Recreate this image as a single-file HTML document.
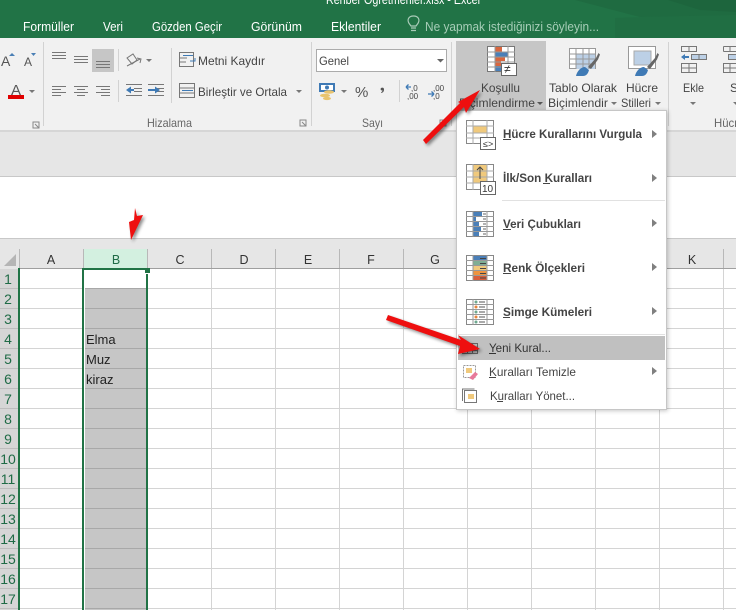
<!DOCTYPE html>
<html><head><meta charset="utf-8"><style>
html,body{margin:0;padding:0;background:#fff;overflow:hidden}
svg{display:block}
text{font-family:"Liberation Sans","DejaVu Sans",sans-serif;font-size:12px;fill:#444}
.t{fill:#fff;font-size:12.5px}
.h{font-size:12.5px;fill:#333;text-anchor:middle}
.r{font-size:14px;fill:#1f6b46;text-anchor:middle}
.m{font-weight:bold;font-size:12px;fill:#444}
.c{font-size:13px;fill:#222}
</style></head><body>
<svg width="736" height="610" viewBox="0 0 736 610" xmlns="http://www.w3.org/2000/svg">
<defs>
<filter id="b" x="-20%" y="-20%" width="140%" height="140%"><feGaussianBlur stdDeviation="1.5"/></filter>
<filter id="s" x="-5%" y="-5%" width="110%" height="110%"><feGaussianBlur stdDeviation="2"/></filter>
</defs>
<!-- title bar -->
<rect width="736" height="38" fill="#217346"/>
<polygon points="615,18 736,14 736,38 615,38" fill="#206e43"/>
<polygon points="575,0 736,0 736,15 640,17" fill="#1f6b41"/>
<polygon points="668,0 736,0 736,12 700,10" fill="#1d653d"/>
<text class="t" x="326" y="4" textLength="154" lengthAdjust="spacingAndGlyphs">Rehber Öğretmenler.xlsx - Excel</text>
<text class="t" x="23" y="31" textLength="51" lengthAdjust="spacingAndGlyphs">Formüller</text>
<text class="t" x="103" y="31" textLength="20" lengthAdjust="spacingAndGlyphs">Veri</text>
<text class="t" x="152" y="31" textLength="70" lengthAdjust="spacingAndGlyphs">Gözden Geçir</text>
<text class="t" x="251" y="31" textLength="51" lengthAdjust="spacingAndGlyphs">Görünüm</text>
<text class="t" x="331" y="31" textLength="50" lengthAdjust="spacingAndGlyphs">Eklentiler</text>
<path d="M411 28h5M411 30.500h5M409.500 24c-3-4-1-8 4-8s7 4 4 8l-1.500 2h-5z" fill="none" stroke="#a9cbb8" stroke-width="1.200"/>
<text x="425" y="31" textLength="174" lengthAdjust="spacingAndGlyphs" style="font-size:12.500px;fill:#a6cdb7">Ne yapmak istediğinizi söyleyin...</text>

<!-- ribbon -->
<rect y="38" width="736" height="92" fill="#f1f1f1"/>
<rect y="130" width="736" height="2" fill="#d6d6d6"/>
<rect y="132" width="736" height="45" fill="#e6e6e6"/>
<rect y="176" width="736" height="1" fill="#c8c8c8"/>
<rect y="177" width="736" height="61" fill="#fff"/>
<rect y="238" width="736" height="1" fill="#c8c8c8"/>
<rect y="239" width="736" height="30" fill="#e6e6e6"/>
<g fill="#d2d2d2">
<rect x="43" y="42" width="1" height="84"/><rect x="311" y="42" width="1" height="84"/><rect x="451" y="42" width="1" height="84"/><rect x="668" y="42" width="1" height="84"/>
<rect x="118" y="49" width="1" height="22"/><rect x="118" y="80" width="1" height="22"/><rect x="171" y="48" width="1" height="55"/><rect x="399" y="80" width="1" height="22"/>
</g>
<!-- font controls -->
<text x="1" y="66" style="font-size:14px;fill:#555">A</text>
<path d="M9 56l3-3 3 3z" fill="#4a7fb5"/>
<text x="24" y="66" style="font-size:12px;fill:#555">A</text>
<path d="M31 53h5l-2.500 3z" fill="#4a7fb5"/>
<text x="11" y="95" style="font-size:15px;fill:#555">A</text>
<rect x="8" y="95" width="16" height="4" fill="#e00000"/>
<path d="M29 90h6l-3 3z" fill="#777"/>
<path d="M33 122h6v6h-6zM35 124l4 4" fill="none" stroke="#888"/>
<!-- alignment -->
<rect x="92" y="49" width="22" height="23" fill="#c6c6c6"/>
<g stroke="#777" stroke-width="1" fill="none">
<path d="M52 52.500h14M52 55.500h14M52 58.500h14"/>
<path d="M74 56.500h14M74 59.500h14M74 62.500h14"/>
<path d="M96 61.500h14M96 64.500h14M96 67.500h14"/>
<path d="M52 86.500h14M52 89.500h9M52 92.500h14M52 95.500h9"/>
<path d="M74 86.500h14M77 89.500h8M74 92.500h14M77 95.500h8"/>
<path d="M96 86.500h14M101 89.500h9M96 92.500h14M101 95.500h9"/>
<path d="M126 84.500h16M134 88.500h8M134 91.500h8M126 95.500h16"/>
<path d="M148 84.500h16M156 88.500h8M156 91.500h8M148 95.500h16"/>
<path d="M127 66l13-7M137 58l4 1-1 4"/>
<path d="M127 58l6-4 4 6-5 4z"/>
</g>
<path d="M126 90l5-3.500v7zM131 89h3v2h-3z" fill="#3f7ab5"/>
<path d="M160 90l-5-3.500v7zM148 89h7v2h-7z" fill="#3f7ab5"/>
<path d="M146 59h6l-3 3z" fill="#777"/>
<!-- wrap and merge -->
<g fill="none" stroke="#777">
<rect x="179.500" y="52.500" width="14" height="14"/>
<path d="M179 58h8M179 62h7"/>
<rect x="179.500" y="83.500" width="15" height="14"/>
<path d="M179 88h16M179 93h16"/>
</g>
<path d="M183 55.500h10M190 61h5v-3" fill="none" stroke="#3f7ab5"/>
<path d="M182 90.500h11" stroke="#3f7ab5" fill="none"/>
<text x="198" y="65" textLength="67" lengthAdjust="spacingAndGlyphs">Metni Kaydır</text>
<text x="198" y="96" textLength="89" lengthAdjust="spacingAndGlyphs">Birleştir ve Ortala</text>
<path d="M296 90h6l-3 3z" fill="#777"/>
<text x="147" y="127" textLength="45" lengthAdjust="spacingAndGlyphs" style="fill:#666">Hizalama</text>
<path d="M300 120h6v6h-6zM302 122l4 4" fill="none" stroke="#888"/>
<!-- number -->
<rect x="316.500" y="49.500" width="130" height="22" fill="#fff" stroke="#ababab"/>
<text x="319" y="65" textLength="30" lengthAdjust="spacingAndGlyphs">Genel</text>
<path d="M437 59h7l-3.500 3.500z" fill="#666"/>
<rect x="320" y="84" width="14" height="7" fill="#fff" stroke="#3f7ab5" stroke-width="2"/>
<circle cx="327" cy="87.500" r="2" fill="#3f7ab5"/>
<ellipse cx="329" cy="92" rx="5" ry="1.800" fill="#e9c46f"/><ellipse cx="325" cy="95.500" rx="5" ry="1.800" fill="#e9c46f"/><ellipse cx="327" cy="98.500" rx="4" ry="1.600" fill="#e9c46f"/>
<path d="M341 90h6l-3 3z" fill="#777"/>
<text x="355" y="97" style="font-size:15px;fill:#555">%</text>
<path d="M381 88c2-1 3 0 3 1.500 0 2-1 3-2.500 3.500l-.500-.8c1-.5 1.500-1 1.500-1.700-1.500.3-2.500-1-1.500-2.500z" fill="#555"/>
<text x="411" y="91" style="font-size:8px">,0</text><text x="407" y="99" style="font-size:8px">,00</text>
<text x="433" y="91" style="font-size:8px">,00</text><text x="433" y="99" style="font-size:8px">,0</text>
<path d="M406 87h5M406 87l2.500-2.500M406 87l2.500 2.500M428 94h6M434 94l-2.500-2.500M434 94l-2.500 2.500" fill="none" stroke="#3f7ab5" stroke-width="1.300"/>
<text x="362" y="127" textLength="21" lengthAdjust="spacingAndGlyphs" style="fill:#666">Sayı</text>
<path d="M440 120h6v6h-6z" fill="none" stroke="#888"/>
<!-- styles -->
<rect x="456" y="41" width="90" height="72" fill="#c6c6c6"/>
<rect x="487.500" y="46.500" width="27" height="25" fill="#fff" stroke="#777"/>
<rect x="495" y="47" width="7" height="5" fill="#d8663f"/><rect x="495" y="52" width="13" height="5" fill="#4a7fb8"/><rect x="495" y="57" width="10" height="4" fill="#d8663f"/><rect x="495" y="61" width="6" height="5" fill="#d8663f"/><rect x="495" y="66" width="6" height="5" fill="#4a7fb8"/>
<path d="M487 52h28M487 57h28M487 62h28M487 67h28M495 46v26M508 46v26" stroke="#999" fill="none"/>
<rect x="501.500" y="63.500" width="15" height="12" fill="#fff" stroke="#666"/>
<text x="504" y="73" style="font-size:12px;fill:#333">≠</text>
<text x="481" y="92" textLength="39" lengthAdjust="spacingAndGlyphs">Koşullu</text>
<text x="459" y="107" textLength="76" lengthAdjust="spacingAndGlyphs">Biçimlendirme</text>
<path d="M537 102h6l-3 3z" fill="#555"/>

<!-- Tablo icon -->
<rect x="569.500" y="48.500" width="26" height="20" fill="#fff" stroke="#999"/>
<rect x="576" y="54" width="19" height="15" fill="#bcd0e6"/>
<path d="M569 54h27M569 59h27M569 64h27M576 48v21M583 48v21M589 48v21" stroke="#999" fill="none"/>
<path d="M588 67l8-9 2.500-5 1.500 1.500-2 5-7 9.500z" fill="#666"/>
<path d="M576 76c1-5 5-9 9-9l4 3c-1 4-3 6-6 6z" fill="#3f7ab5"/>
<text x="549" y="92" textLength="68" lengthAdjust="spacingAndGlyphs">Tablo Olarak</text>
<text x="548" y="107" textLength="60" lengthAdjust="spacingAndGlyphs">Biçimlendir</text>
<path d="M611 102h6l-3 3z" fill="#777"/>

<!-- Hucre icon -->
<rect x="628.500" y="46.500" width="27" height="22" fill="#fff" stroke="#999"/>
<rect x="634" y="51" width="17" height="14" fill="#bcd0e6" stroke="#aaa"/>
<path d="M647 67l8-9 2.500-5 1.500 1.500-2 5-7 9.500z" fill="#666"/>
<path d="M635 76c1-5 5-9 9-9l4 3c-1 4-3 6-6 6z" fill="#3f7ab5"/>
<text x="626" y="92" textLength="32" lengthAdjust="spacingAndGlyphs">Hücre</text>
<text x="621" y="107" textLength="30" lengthAdjust="spacingAndGlyphs">Stilleri</text>
<path d="M655 102h6l-3 3z" fill="#777"/>

<g fill="none" stroke="#777">
<path d="M681.500 46.500h15v5h-15zM689 46.500v5"/>
<path d="M681.500 63.500h15v9h-15zM681.500 68h15M689 63.500v9"/>
<path d="M691.500 54.500h15v5h-15z" fill="#bcd0e6"/><path d="M699 54.500v5"/>
<path d="M723.500 46.500h13M723.500 51.500h13M723.500 63.500h13v9h-13zM723.500 46.500v5M730 46.500v5M723.500 68h13M730 63.500v9"/>
<path d="M728.500 54.500h8v5h-8z" fill="#bcd0e6"/>
</g>
<path d="M681 57l4-3v2h4v2h-4v2z" fill="#3f7ab5"/>
<text x="683" y="92" textLength="21" lengthAdjust="spacingAndGlyphs">Ekle</text>
<path d="M690 102h6l-3 3z" fill="#777"/>
<text x="730" y="92">S</text>
<path d="M733 102h3v3z" fill="#777"/>
<text x="714" y="127" textLength="24" lengthAdjust="spacingAndGlyphs" style="fill:#666">Hücr</text>

<!-- sheet -->
<rect x="0" y="269" width="18" height="341" fill="#d6d6d6"/>
<path d="M4 266l12-12v12z" fill="#b5b5b5"/>
<rect x="84" y="249" width="63" height="19" fill="#d3f0e0"/>
<rect x="85" y="288" width="62" height="322" fill="#c6c6c6"/>
<g stroke="#d4d4d4" stroke-width="1" fill="none">
<path d="M19.500 269V610M211.500 269V610M275.500 269V610M339.500 269V610M403.500 269V610M467.500 269V610M531.500 269V610M595.500 269V610M659.500 269V610M723.500 269V610"/>
<path d="M19 288.500h65M148 288.500h588M19 308.500h65M148 308.500h588M19 328.500h65M148 328.500h588M19 348.500h65M148 348.500h588M19 368.500h65M148 368.500h588M19 388.500h65M148 388.500h588M19 408.500h65M148 408.500h588M19 428.500h65M148 428.500h588M19 448.500h65M148 448.500h588M19 468.500h65M148 468.500h588M19 488.500h65M148 488.500h588M19 508.500h65M148 508.500h588M19 528.500h65M148 528.500h588M19 548.500h65M148 548.500h588M19 568.500h65M148 568.500h588M19 588.500h65M148 588.500h588M19 608.500h65M148 608.500h588"/>
</g>
<path d="M85 288.500h62M85 308.500h62M85 328.500h62M85 348.500h62M85 368.500h62M85 388.500h62M85 408.500h62M85 428.500h62M85 448.500h62M85 468.500h62M85 488.500h62M85 508.500h62M85 528.500h62M85 548.500h62M85 568.500h62M85 588.500h62M85 608.500h62" stroke="#a8a8a8" fill="none"/>
<path d="M0 288.500h18M0 308.500h18M0 328.500h18M0 348.500h18M0 368.500h18M0 388.500h18M0 408.500h18M0 428.500h18M0 448.500h18M0 468.500h18M0 488.500h18M0 508.500h18M0 528.500h18M0 548.500h18M0 568.500h18M0 588.500h18M0 608.500h18" stroke="#bdbdbd" fill="none"/>
<path d="M19.500 249v19M83.500 249v19M147.500 249v19M211.500 249v19M275.500 249v19M339.500 249v19M403.500 249v19M467.500 249v19M531.500 249v19M595.500 249v19M659.500 249v19M723.500 249v19" stroke="#b8b8b8" fill="none"/>
<rect x="19" y="268" width="717" height="1" fill="#9f9f9f"/>
<text class="h" x="51" y="264">A</text><text class="h" x="116" y="264" style="fill:#1f6b46">B</text><text class="h" x="180" y="264">C</text><text class="h" x="244" y="264">D</text><text class="h" x="308" y="264">E</text><text class="h" x="371" y="264">F</text><text class="h" x="435" y="264">G</text><text class="h" x="692" y="264">K</text>
<text class="r" x="8" y="284">1</text><text class="r" x="8" y="304">2</text><text class="r" x="8" y="324">3</text><text class="r" x="8" y="344">4</text><text class="r" x="8" y="364">5</text><text class="r" x="8" y="384">6</text><text class="r" x="8" y="404">7</text><text class="r" x="8" y="424">8</text><text class="r" x="8" y="444">9</text><text class="r" x="8" y="464">10</text><text class="r" x="8" y="484">11</text><text class="r" x="8" y="504">12</text><text class="r" x="8" y="524">13</text><text class="r" x="8" y="544">14</text><text class="r" x="8" y="564">15</text><text class="r" x="8" y="584">16</text><text class="r" x="8" y="604">17</text>
<text class="c" x="86" y="344">Elma</text><text class="c" x="86" y="364">Muz</text><text class="c" x="86" y="384">kiraz</text>
<!-- selection -->
<g fill="#217346">
<rect x="18" y="268" width="2" height="342"/>
<rect x="82" y="268" width="2" height="342"/>
<rect x="146" y="268" width="2" height="342"/>
<rect x="82" y="268" width="66" height="2"/>
<rect x="145" y="268" width="5" height="5"/>
</g>
<rect x="145" y="273" width="4" height="1" fill="#fff"/>

<!-- menu -->
<rect x="457" y="111" width="211" height="300" fill="#000" opacity=".22" filter="url(#s)"/>
<rect x="456.500" y="110.500" width="210" height="299" fill="#fff" stroke="#c6c6c6"/>
<rect x="458" y="336" width="207" height="24" fill="#c0c0c0"/>
<rect x="502" y="200" width="163" height="1" fill="#e1e1e1"/>
<rect x="458" y="334" width="207" height="1" fill="#e1e1e1"/>

<!-- m1 -->
<rect x="466.500" y="120.500" width="27" height="23" fill="#fff" stroke="#888"/>
<rect x="473" y="126" width="14" height="7" fill="#f0c97c"/>
<path d="M466 126h28M466 133h28M466 138h28M473 120v24M487 120v24" stroke="#aaa" fill="none"/>
<rect x="480.500" y="137.500" width="15" height="12" fill="#fff" stroke="#666"/>
<text x="483" y="147" style="font-size:9px;fill:#333">≤&gt;</text>
<text class="m" x="503" y="138" textLength="139" lengthAdjust="spacingAndGlyphs">Hücre Kurallarını Vurgula</text>
<rect x="503" y="139" width="8" height="1" fill="#444"/>
<!-- m2 -->
<rect x="466.500" y="164.500" width="27" height="25" fill="#fff" stroke="#888"/>
<rect x="473" y="165" width="14" height="18" fill="#f0c97c"/>
<path d="M466 171h28M466 177h28M466 183h28M473 164v26M487 164v26" stroke="#aaa" fill="none"/>
<path d="M480 179v-12M477 170l3-3 3 3" stroke="#444" fill="none"/>
<rect x="480.500" y="181.500" width="15" height="13" fill="#fff" stroke="#666"/>
<text x="482" y="192" style="font-size:10px;fill:#333">10</text>
<text class="m" x="503" y="182" textLength="89" lengthAdjust="spacingAndGlyphs">İlk/Son Kuralları</text>
<rect x="543" y="183" width="7" height="1" fill="#444"/>
<!-- m3 -->
<rect x="466.500" y="211.500" width="27" height="25" fill="#fff" stroke="#888"/>
<g fill="#4a7fb8"><rect x="473" y="212" width="9" height="4"/><rect x="473" y="217" width="3" height="4"/><rect x="473" y="222" width="6" height="4"/><rect x="473" y="227" width="8" height="4"/><rect x="473" y="232" width="6" height="4"/></g>
<path d="M466 216.500h28M466 221.500h28M466 226.500h28M466 231.500h28M473 211v26M487 211v26" stroke="#999" fill="none"/>
<path d="M483 214h3M483 219h3M483 224h3M483 229h3M483 234h3" stroke="#666" fill="none"/>
<text class="m" x="503" y="228" textLength="78" lengthAdjust="spacingAndGlyphs">Veri Çubukları</text>
<rect x="503" y="229" width="8" height="1" fill="#444"/>
<!-- m4 -->
<rect x="466.500" y="255.500" width="27" height="25" fill="#fff" stroke="#888"/>
<rect x="473" y="256" width="14" height="5" fill="#4a7fb8"/><rect x="473" y="261" width="14" height="5" fill="#7fae94"/><rect x="473" y="266" width="14" height="5" fill="#f0c97c"/><rect x="473" y="271" width="14" height="5" fill="#ee9440"/><rect x="473" y="276" width="14" height="4" fill="#d95f3c"/>
<path d="M466 260.500h28M466 265.500h28M466 270.500h28M466 275.500h28M473 255v26M487 255v26" stroke="#999" fill="none"/>
<path d="M480 258.500h6M480 263.500h6M480 268.500h6M480 273.500h6M480 278h6" stroke="#444" fill="none"/>
<text class="m" x="503" y="272" textLength="82" lengthAdjust="spacingAndGlyphs">Renk Ölçekleri</text>
<rect x="503" y="273" width="8" height="1" fill="#444"/>
<!-- m5 -->
<rect x="466.500" y="299.500" width="27" height="25" fill="#fff" stroke="#888"/>
<path d="M466 304.500h28M466 309.500h28M466 314.500h28M466 319.500h28M473 299v26M487 299v26" stroke="#999" fill="none"/>
<circle cx="476" cy="302" r="1.500" fill="#6fa88f"/><circle cx="476" cy="307" r="1.500" fill="#e8853b"/><circle cx="476" cy="312" r="1.500" fill="#6fa88f"/><circle cx="476" cy="317" r="1.500" fill="#e8853b"/><circle cx="476" cy="322" r="1.500" fill="#6fa88f"/>
<path d="M479 302h6M479 307h6M479 312h6M479 317h6M479 322h6" stroke="#555" fill="none"/>
<text class="m" x="503" y="316" textLength="89" lengthAdjust="spacingAndGlyphs">Simge Kümeleri</text>
<rect x="503" y="317" width="7" height="1" fill="#444"/>
<!-- m6 -->
<g fill="none" stroke="#666"><rect x="462.500" y="343.500" width="15" height="10"/><path d="M462 347h16M462 350.500h16M467.500 343v11M472.500 343v11"/></g>
<text x="489" y="352" textLength="62" lengthAdjust="spacingAndGlyphs" style="fill:#333">Yeni Kural...</text>
<rect x="489" y="353" width="7" height="1" fill="#333"/>
<rect x="463.500" y="365.500" width="12" height="12" fill="#fff" stroke="#999" stroke-dasharray="2 1"/>
<rect x="466" y="368" width="6" height="5" fill="#f0c97c"/>
<path d="M469 378l6-6 3 2-5 6z" fill="#e8799a"/>
<text x="489" y="376" textLength="87" lengthAdjust="spacingAndGlyphs">Kuralları Temizle</text>
<rect x="489" y="377" width="7" height="1" fill="#444"/>
<rect x="464.500" y="390.500" width="12" height="12" fill="#fff" stroke="#777"/>
<path d="M462.500 401v-12h12" fill="none" stroke="#777"/>
<rect x="468" y="394" width="6" height="5" fill="#f0c97c"/>
<text x="490" y="400" textLength="85" lengthAdjust="spacingAndGlyphs">Kuralları Yönet...</text>
<rect x="497" y="401" width="6" height="1" fill="#444"/>
<path d="M652 130l5 4-5 4zM652 174l5 4-5 4zM652 219l5 4-5 4zM652 263l5 4-5 4zM652 307l5 4-5 4zM652 367l5 4-5 4z" fill="#808080"/>

<!-- red arrow shadows -->
<g fill="#000" opacity=".45" filter="url(#b)">
<polygon points="482,92 468,115 466,109 428,146 425,142 462,105 460,104"/>
<polygon points="482,351 460,356 462,348 388,322 390,317 463,342 460,337"/>
<polygon points="137,210 139,218 145,217 133,242 131,224 136,222"/>
</g>
<!-- red arrows -->
<g fill="#ee0f0f">
<polygon points="480,90 466,113 464,107 426,144 423,140 460,103 458,102"/>
<polygon points="480,349 458,354 460,346 386,320 388,315 461,340 458,335"/>
<polygon points="135,208 137,216 143,215 131,240 129,222 134,220"/>
</g>
</svg>
</body></html>
